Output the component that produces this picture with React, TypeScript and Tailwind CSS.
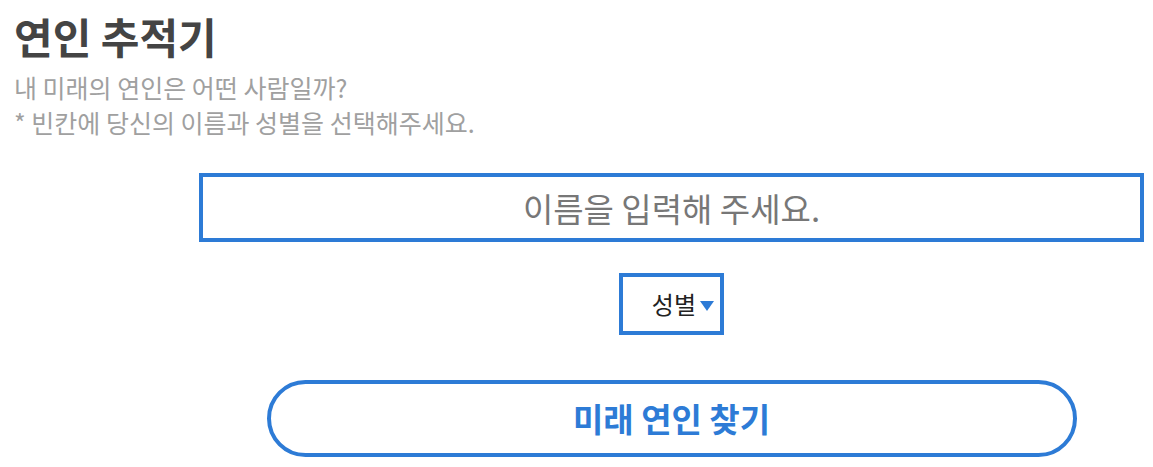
import { useState } from "react";

export default function App() {
  // State
  const [name, setName] = useState("");
  const [gender, setGender] = useState("");

  return (
    <div className="min-h-screen bg-white pt-[12px] font-['Malgun_Gothic','Noto_Sans_CJK_KR',sans-serif]">
      {/* Header */}
      <div className="px-[14px]">
        <h1 className="text-[42px] font-bold leading-[48px] text-[#444444]">
          연인 추적기
        </h1>
        <p className="mt-[10px] text-[25px] leading-[35px] text-[#a0a0a0]">
          내 미래의 연인은 어떤 사람일까?
          <br />* 빈칸에 당신의 이름과 성별을 선택해주세요.
        </p>
      </div>

      {/* Form */}
      <div className="mt-[33px] flex flex-col items-center pl-[190px]">
        <input
          value={name}
          onChange={(e) => setName(e.target.value)}
          placeholder="이름을 입력해 주세요."
          className="h-[69px] w-[945px] border-4 border-[#2d7bd6] text-center text-[33px] text-[#555] outline-none placeholder:text-[#777777]"
        />

        <div className="mt-[31px] flex h-[62px] w-[105px] items-center justify-end border-4 border-[#2d7bd6] pr-[6px]">
          <select
            value={gender}
            onChange={(e) => setGender(e.target.value)}
            className="sr-only"
          >
            <option value="">성별</option>
            <option value="male">남자</option>
            <option value="female">여자</option>
          </select>
          <span className="text-[24px] text-[#222]">성별</span>
          <svg width="14" height="10" viewBox="0 0 14 10" className="ml-[4px] mt-[4px]">
            <path d="M0 0 L14 0 L7 10 Z" fill="#2d7bd6" />
          </svg>
        </div>

        <button className="mt-[45px] h-[77px] w-[810px] rounded-full border-4 border-[#2d7bd6] text-[33px] font-bold text-[#2d7bd6]">
          미래 연인 찾기
        </button>
      </div>
    </div>
  );
}
